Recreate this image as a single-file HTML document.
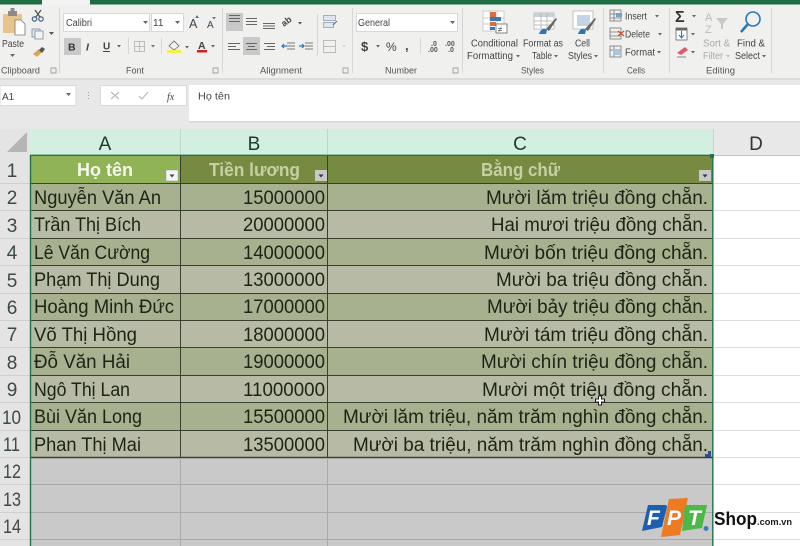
<!DOCTYPE html>
<html><head><meta charset="utf-8"><style>
html,body{margin:0;padding:0;background:#fff;width:800px;height:546px;overflow:hidden}
svg{display:block;filter:blur(.35px)}
text{font-family:"Liberation Sans",sans-serif}
.rb{font-size:10px;fill:#444}
.gl{font-size:9.500px;fill:#555}
.d{font-size:19px;fill:#1c2414}
.rh{font-size:19px;fill:#3c4a40}
.ch{font-size:19px;fill:#1f3a2a}
.h{font-size:18px;font-weight:bold}
</style></head><body>
<svg width="800" height="546" viewBox="0 0 800 546" xmlns="http://www.w3.org/2000/svg">
<!-- title tabs -->
<rect width="800" height="80" fill="#f0f0ef"/>
<rect x="0" y="0" width="42" height="4.500" fill="#1f6e43"/>
<rect x="90" y="0" width="710" height="4.500" fill="#1f6e43"/>
<rect x="42" y="0" width="48" height="5" fill="#f3f3f3"/>
<!-- ribbon separators -->
<g stroke="#d6d6d6" stroke-width="1">
<path d="M59.500 8V73M222.500 8V73M352.500 8V73M462.500 8V73M603.500 8V73M669.500 8V73M771.500 8V73M317.500 14V56M128.500 38V54M161.500 38V54M420.500 38V54"/>
</g>
<!-- Clipboard -->
<rect x="3" y="14" width="19" height="19" rx="1" fill="#e8c48c"/>
<rect x="8" y="11" width="9" height="5" fill="#8b8b8b"/>
<rect x="10.500" y="8" width="4" height="4" fill="#8b8b8b"/>
<path d="M15 20h6l4 4v11H15z" fill="#fff" stroke="#777" stroke-width=".8"/>
<text x="2" y="47" class="rb" textLength="22" lengthAdjust="spacingAndGlyphs">Paste</text>
<path d="M10 54h5l-2.500 3z" fill="#666"/>
<g stroke="#4a6f92" fill="none" stroke-width="1.300"><circle cx="34.500" cy="19" r="2.200"/><circle cx="41" cy="19" r="2.200"/><path d="M36 17L41 10M40 17L35 10" stroke="#555"/></g>
<rect x="32" y="29" width="8" height="8" fill="#dfe6ec" stroke="#7d8b97" stroke-width=".8"/><rect x="35" y="31" width="8" height="8" fill="#f2f5f7" stroke="#7d8b97" stroke-width=".8"/>
<path d="M49 32h5l-2.500 3z" fill="#555"/>
<path d="M33 54l6-5 3 3-5 5z" fill="#d9a45a"/><path d="M39 50l3-3 3 2-3 4z" fill="#555"/>
<text x="1" y="73.500" class="gl" textLength="39" lengthAdjust="spacingAndGlyphs">Clipboard</text>
<path d="M51 68h5v5h-5z" fill="none" stroke="#888" stroke-width=".7"/>
<!-- Font -->
<rect x="63.500" y="13.500" width="86" height="18" fill="#fff" stroke="#d8d8d8"/>
<rect x="151.500" y="13.500" width="32" height="18" fill="#fff" stroke="#d8d8d8"/>
<text x="66" y="26" class="rb" textLength="26" lengthAdjust="spacingAndGlyphs">Calibri</text>
<text x="153" y="26" class="rb">11</text>
<path d="M143 21h5l-2.500 3zM175 21h5l-2.500 3z" fill="#666"/>
<text x="189" y="28" style="font-size:12.500px;fill:#444">A</text><path d="M195 18h4l-2-3z" fill="#4a7fb0"/>
<text x="207" y="28" style="font-size:10px;fill:#444">A</text><path d="M212 17h4l-2 2.500z" fill="#4a7fb0"/>
<rect x="64" y="38" width="17" height="17" fill="#c9c9c9"/>
<text x="68" y="50.500" style="font-size:10.500px;font-weight:bold;fill:#333">B</text>
<text x="86" y="50.500" style="font-size:10.500px;font-style:italic;font-weight:bold;fill:#444">I</text>
<text x="103" y="49.500" style="font-size:10px;font-weight:bold;fill:#444">U</text><rect x="103" y="51" width="7" height="1" fill="#444"/>
<path d="M117 45h4l-2 2.500z" fill="#666"/>
<rect x="134.500" y="41.500" width="10" height="10" fill="none" stroke="#bdbdbd"/><path d="M139.500 41v11M134 46.500h11" stroke="#bdbdbd"/>
<path d="M151 45h4l-2 2.500z" fill="#777"/>
<path d="M169 46l5-5 5 5-5 4z" fill="#f2f2f2" stroke="#666" stroke-width=".8"/>
<rect x="167" y="50" width="14" height="3" fill="#f4ef4a"/>
<path d="M185 46h4l-2 2.500z" fill="#666"/>
<text x="198" y="49" style="font-size:10.500px;font-weight:bold;fill:#444">A</text>
<rect x="197" y="50" width="10" height="2.500" fill="#d71f1f"/>
<path d="M211 45h4l-2 2.500z" fill="#666"/>
<text x="126" y="73.500" class="gl" textLength="18" lengthAdjust="spacingAndGlyphs">Font</text>
<path d="M213 68h5v5h-5z" fill="none" stroke="#888" stroke-width=".7"/>
<!-- Alignment -->
<rect x="226" y="13" width="17" height="18" fill="#c9c9c9"/>
<rect x="243" y="37" width="17" height="18" fill="#c9c9c9"/>
<g stroke="#666" stroke-width="1.100">
<path d="M229 15.500h11M229 18.500h11M229 21.500h11"/>
<path d="M246 18.500h11M246 21.500h11M246 24.500h11"/>
<path d="M263 23.500h12M263 26h12M263 28.500h12"/>
<path d="M228 43.500h12M228 46.500h8M228 49.500h12"/>
<path d="M246 43.500h11M248 46.500h7M246 49.500h11"/>
<path d="M264 43.500h11M267 46.500h8M264 49.500h11"/>
<path d="M287 43h8M287 46h8M287 49h8M305 43h8M305 46h8M305 49h8" stroke="#777"/>
</g>
<path d="M282 46h5M284 44l-2 2 2 2M299 46h5M302 44l2 2-2 2" stroke="#2a77bb" stroke-width="1.200" fill="none"/>
<text x="284" y="27" transform="rotate(-38 284 27)" style="font-size:9px;fill:#444;font-weight:bold">ab</text>
<path d="M298 22h4l-2 2.500z" fill="#555"/>
<rect x="323.500" y="15.500" width="12" height="5" fill="#dfe6ec" stroke="#8298ab" stroke-width=".7"/>
<rect x="323.500" y="22.500" width="10" height="5" fill="#dfe6ec" stroke="#8298ab" stroke-width=".7"/>
<path d="M333 25l4-4" stroke="#2a77bb" fill="none"/>
<rect x="323.500" y="40.500" width="12" height="12" fill="none" stroke="#bbb"/><path d="M323 46.500h13" stroke="#bbb"/>
<path d="M342 45h4l-2 2z" fill="#ccc"/>
<text x="260" y="73.500" class="gl" textLength="42" lengthAdjust="spacingAndGlyphs">Alignment</text>
<path d="M343 68h5v5h-5z" fill="none" stroke="#888" stroke-width=".7"/>
<!-- Number -->
<rect x="356.500" y="13.500" width="101" height="18" fill="#fff" stroke="#d8d8d8"/>
<text x="358" y="26" class="rb" textLength="32" lengthAdjust="spacingAndGlyphs">General</text>
<path d="M450 21h5l-2.500 3z" fill="#666"/>
<text x="361" y="51" style="font-size:13px;font-weight:bold;fill:#444">$</text>
<path d="M376 45h4l-2 2.500z" fill="#666"/>
<text x="386" y="51" style="font-size:12px;fill:#444">%</text>
<text x="405" y="50" style="font-size:13px;font-weight:bold;fill:#444">,</text>
<text x="431" y="46" style="font-size:7px;font-weight:bold;fill:#555">.0</text><text x="428" y="52" style="font-size:7px;font-weight:bold;fill:#555">.00</text>
<text x="445" y="46" style="font-size:7px;font-weight:bold;fill:#555">.00</text><text x="448" y="52" style="font-size:7px;font-weight:bold;fill:#555">.0</text>
<text x="385" y="73.500" class="gl" textLength="32" lengthAdjust="spacingAndGlyphs">Number</text>
<path d="M453 68h5v5h-5z" fill="none" stroke="#888" stroke-width=".7"/>
<!-- Styles -->
<rect x="483" y="11" width="21" height="20" fill="#fff" stroke="#bbb" stroke-width=".7"/>
<path d="M483 18h21M483 24h21M490 11v20M497 11v20" stroke="#bbb" stroke-width=".7"/>
<rect x="490" y="12" width="6" height="5" fill="#d96f3c"/><rect x="490" y="17" width="11" height="4" fill="#3a78b5"/><rect x="490" y="22" width="6" height="4" fill="#d96f3c"/><rect x="490" y="27" width="5" height="3" fill="#3a78b5"/>
<rect x="496" y="24" width="11" height="9" fill="#fff" stroke="#666" stroke-width=".8"/>
<text x="498" y="32" style="font-size:8px;fill:#444">≠</text>
<text x="471" y="46.500" class="rb" textLength="47" lengthAdjust="spacingAndGlyphs">Conditional</text>
<text x="467" y="59" class="rb" textLength="46" lengthAdjust="spacingAndGlyphs">Formatting</text>
<path d="M516 55h4l-2 2.500z" fill="#666"/>
<rect x="534" y="13" width="20" height="16" fill="#fff" stroke="#aaa" stroke-width=".7"/>
<rect x="534" y="13" width="20" height="4" fill="#c8d0d8"/><path d="M534 21h20M534 25h20M541 13v16M547 13v16" stroke="#aaa" stroke-width=".7"/>
<path d="M539 34c2-6 6-6 8-4l-1 4z" fill="#2a77bb"/><path d="M546 29l10-11 1 1-8 12z" fill="#666"/>
<text x="523" y="46.500" class="rb" textLength="40" lengthAdjust="spacingAndGlyphs">Format as</text>
<text x="532" y="59" class="rb" textLength="20" lengthAdjust="spacingAndGlyphs">Table</text>
<path d="M554 55h4l-2 2.500z" fill="#666"/>
<rect x="573" y="11" width="20" height="18" fill="#fff" stroke="#aaa" stroke-width=".7"/>
<rect x="577" y="15" width="13" height="11" fill="#c5d3e6"/>
<path d="M578 34c2-6 6-6 8-4l-1 4z" fill="#2a77bb"/><path d="M585 29l10-11 1 1-8 12z" fill="#666"/>
<text x="575" y="46.500" class="rb" textLength="15" lengthAdjust="spacingAndGlyphs">Cell</text>
<text x="568" y="59" class="rb" textLength="24" lengthAdjust="spacingAndGlyphs">Styles</text>
<path d="M594 55h4l-2 2.500z" fill="#666"/>
<text x="521" y="73.500" class="gl" textLength="23" lengthAdjust="spacingAndGlyphs">Styles</text>
<!-- Cells -->
<g fill="none" stroke="#777" stroke-width=".8"><rect x="610" y="10" width="11" height="11"/><path d="M610 14h11M610 18h11M614 10v11"/><rect x="610" y="28" width="11" height="11"/><path d="M610 32h11M610 36h11"/><rect x="610" y="46" width="11" height="11"/><path d="M610 50h11M614 46v11"/></g>
<path d="M616 13h6v4h-6z" fill="#6fa2cf"/>
<path d="M618 31l6 5M624 31l-6 5" stroke="#d9502e" stroke-width="1.200"/>
<rect x="613" y="49" width="7" height="6" fill="#a9c4de"/>
<text x="625" y="19.500" class="rb" textLength="22" lengthAdjust="spacingAndGlyphs">Insert</text>
<text x="625" y="37.500" class="rb" textLength="25" lengthAdjust="spacingAndGlyphs">Delete</text>
<text x="625" y="55.500" class="rb" textLength="30" lengthAdjust="spacingAndGlyphs">Format</text>
<path d="M655 15h4l-2 2.500zM658 33h4l-2 2.500zM657 51h4l-2 2.500z" fill="#666"/>
<text x="627" y="73.500" class="gl" textLength="18" lengthAdjust="spacingAndGlyphs">Cells</text>
<!-- Editing -->
<text x="675" y="22" style="font-size:16px;fill:#333;font-weight:bold">Σ</text>
<path d="M692 15h4l-2 2.500zM691 33h4l-2 2.500zM691 51h4l-2 2.500z" fill="#666"/>
<rect x="676" y="28" width="11" height="12" fill="#fff" stroke="#666" stroke-width=".8"/>
<rect x="676" y="28" width="11" height="2.500" fill="#666"/>
<path d="M681.500 31v7M679 35l2.500 3 2.500-3" stroke="#2a77bb" fill="none"/>
<path d="M677 53l8-6 3 3-7 5z" fill="#e05a6c"/><path d="M677 57h9" stroke="#888"/>
<text x="705" y="21" style="font-size:11px;fill:#bbb">A</text><text x="705" y="33" style="font-size:11px;fill:#bbb">Z</text>
<path d="M716 18h12l-5 6v5h-2v-5z" fill="#c8c8c8"/>
<text x="703" y="46.500" class="rb" textLength="27" lengthAdjust="spacingAndGlyphs" style="fill:#aaa">Sort &amp;</text>
<text x="703" y="59" class="rb" textLength="20" lengthAdjust="spacingAndGlyphs" style="fill:#aaa">Filter</text>
<path d="M726 55h4l-2 2.500z" fill="#bbb"/>
<circle cx="753" cy="19" r="7" fill="none" stroke="#2a77bb" stroke-width="1.600"/>
<path d="M748 24l-7 8" stroke="#2a77bb" stroke-width="2.600"/>
<text x="737" y="46.500" class="rb" textLength="28" lengthAdjust="spacingAndGlyphs">Find &amp;</text>
<text x="735" y="59" class="rb" textLength="25" lengthAdjust="spacingAndGlyphs">Select</text>
<path d="M762 55h4l-2 2.500z" fill="#666"/>
<text x="706" y="73.500" class="gl" textLength="29" lengthAdjust="spacingAndGlyphs">Editing</text>
<!-- formula bar -->
<rect y="78" width="800" height="52" fill="#e8e8e8"/>
<rect y="78" width="800" height="2" fill="#dcdcdc"/>
<rect x="0" y="85.500" width="76" height="20" fill="#fff" stroke="#dadada"/>
<text x="2" y="100" style="font-size:10px;fill:#444">A1</text>
<path d="M66 93h5l-2.500 3z" fill="#666"/>
<path d="M88.500 92v1M88.500 95v1M88.500 98v1" stroke="#999"/>
<rect x="100.500" y="85.500" width="86" height="20" fill="#fff" stroke="#dadada"/>
<path d="M111 92l8 7M119 92l-8 7" stroke="#bbb" stroke-width="1.200"/>
<path d="M139 96l3 3 6-7" stroke="#bbb" stroke-width="1.200" fill="none"/>
<text x="167" y="100" style="font-size:10px;font-style:italic;font-family:'Liberation Serif',serif;fill:#444">fx</text>
<rect x="189" y="85" width="611" height="36.500" fill="#fff"/>
<rect x="189" y="121" width="611" height="1.500" fill="#d6d6d6"/>
<text x="198" y="99.500" style="font-size:10px;fill:#444" textLength="32" lengthAdjust="spacingAndGlyphs">Họ tên</text>
<!-- headers -->
<rect y="129" width="800" height="417" fill="#fff"/>
<rect x="0" y="129" width="30" height="417" fill="#e4e4e4"/>
<rect x="30" y="129" width="770" height="26" fill="#e8e8e8"/>
<rect x="30" y="129" width="683" height="26" fill="#d2efe0"/>
<path d="M7 152L27 132V152z" fill="#b5b5b5"/>
<path d="M180.500 129v26M327.500 129v26" stroke="#bcd6c7"/>
<path d="M713.500 129v26" stroke="#cfcfcf"/>
<path d="M714 155.500h86" stroke="#c4c4c4"/>
<text x="105" y="150" text-anchor="middle" class="ch">A</text>
<text x="254" y="150" text-anchor="middle" class="ch">B</text>
<text x="520" y="150" text-anchor="middle" class="ch">C</text>
<text x="756" y="150" text-anchor="middle" style="font-size:19px;fill:#333">D</text>
<!-- body right white gridlines -->
<g stroke="#dcdcdc"><path d="M714 183.500h86M714 210.500h86M714 238.500h86M714 265.500h86M714 293.500h86M714 320.500h86M714 347.500h86M714 375.500h86M714 402.500h86M714 430.500h86M714 457.500h86M714 484.500h86M714 512.500h86M714 539.500h86"/></g>
<!-- row header lines -->
<g stroke="#cfcfcf"><path d="M0 183.500h30M0 210.500h30M0 238.500h30M0 265.500h30M0 293.500h30M0 320.500h30M0 347.500h30M0 375.500h30M0 402.500h30M0 430.500h30M0 457.500h30M0 484.500h30M0 512.500h30M0 539.500h30"/></g>
<text x="12" y="177" class="rh" text-anchor="middle">1</text>
<text x="12" y="204" class="rh" text-anchor="middle">2</text>
<text x="12" y="232" class="rh" text-anchor="middle">3</text>
<text x="12" y="259" class="rh" text-anchor="middle">4</text>
<text x="12" y="287" class="rh" text-anchor="middle">5</text>
<text x="12" y="314" class="rh" text-anchor="middle">6</text>
<text x="12" y="341" class="rh" text-anchor="middle">7</text>
<text x="12" y="369" class="rh" text-anchor="middle">8</text>
<text x="12" y="396" class="rh" text-anchor="middle">9</text>
<text x="2" y="424" class="rh" textLength="19" lengthAdjust="spacingAndGlyphs">10</text>
<text x="3" y="451" class="rh" textLength="17" lengthAdjust="spacingAndGlyphs">11</text>
<text x="3" y="478" class="rh" textLength="18" lengthAdjust="spacingAndGlyphs">12</text>
<text x="3" y="506" class="rh" textLength="18" lengthAdjust="spacingAndGlyphs">13</text>
<text x="3" y="533" class="rh" textLength="18" lengthAdjust="spacingAndGlyphs">14</text>
<!-- sheet fill -->
<rect x="30" y="156" width="683" height="390" fill="#c9c9c9"/>
<rect x="30" y="156" width="150" height="27" fill="#90b355"/>
<rect x="180" y="156" width="533" height="27" fill="#778a42"/>
<rect x="30" y="183" width="683" height="27.500" fill="#a7b08f"/>
<rect x="30" y="210.500" width="683" height="27.500" fill="#b7bba6"/>
<rect x="30" y="238" width="683" height="27.500" fill="#a7b08f"/>
<rect x="30" y="265.500" width="683" height="27.500" fill="#b7bba6"/>
<rect x="30" y="293" width="683" height="27.500" fill="#a7b08f"/>
<rect x="30" y="320.500" width="683" height="27" fill="#b7bba6"/>
<rect x="30" y="347.500" width="683" height="27.500" fill="#a7b08f"/>
<rect x="30" y="375" width="683" height="27.500" fill="#b7bba6"/>
<rect x="30" y="402.500" width="683" height="27.500" fill="#a7b08f"/>
<rect x="30" y="430" width="683" height="27.500" fill="#b7bba6"/>
<g stroke="#3a4030" stroke-width="1" fill="none">
<path d="M30 183.500h683M30 210.500h683M30 238.500h683M30 265.500h683M30 293.500h683M30 320.500h683M30 347.500h683M30 375.500h683M30 402.500h683M30 430.500h683"/>
<path d="M180.500 156v301M327.500 156v301"/>
</g>
<path d="M30 457.500h683" stroke="#3a4030" stroke-width="1.500"/>
<g stroke="#a9a9a9"><path d="M30 484.500h683M30 512.500h683M30 539.500h683M180.500 458v88M327.500 458v88"/></g>
<rect x="712.600" y="155" width="87.400" height="391" fill="none"/>
<path d="M30.500 155v391M712.800 155v391" stroke="#217346" stroke-width="1.400" fill="none"/>
<path d="M30 155.300h683" stroke="#217346" stroke-width="1.400"/>
<rect x="710" y="154" width="4" height="4" fill="#217346"/>
<path d="M705 457h6v-6h-3v3h-3z" fill="#2b4f9c"/>
<!-- header text -->
<text class="h" x="77" y="176" fill="#f6f8ee" textLength="56" lengthAdjust="spacingAndGlyphs">Họ tên</text>
<text class="h" x="209" y="176" fill="#c6d0a2" textLength="91" lengthAdjust="spacingAndGlyphs">Tiền lương</text>
<text class="h" x="481" y="176" fill="#c6d0a2" textLength="79" lengthAdjust="spacingAndGlyphs">Bằng chữ</text>
<rect x="166" y="170" width="12" height="11" fill="#f4f4f4" stroke="#99a" stroke-width=".5"/><path d="M169.500 174.500h5l-2.500 3z" fill="#444"/>
<rect x="315" y="170" width="12" height="11" fill="#c8c8c8"/><path d="M318.500 174.500h5l-2.500 3z" fill="#333"/>
<rect x="699" y="170" width="12" height="11" fill="#c8c8c8"/><path d="M702.500 174.500h5l-2.500 3z" fill="#333"/>
<!-- data -->
<text class="d" x="34" y="204" textLength="127" lengthAdjust="spacingAndGlyphs">Nguyễn Văn An</text>
<text class="d" x="34" y="231" textLength="107" lengthAdjust="spacingAndGlyphs">Trần Thị Bích</text>
<text class="d" x="34" y="259" textLength="116" lengthAdjust="spacingAndGlyphs">Lê Văn Cường</text>
<text class="d" x="34" y="286" textLength="126" lengthAdjust="spacingAndGlyphs">Phạm Thị Dung</text>
<text class="d" x="34" y="313" textLength="140" lengthAdjust="spacingAndGlyphs">Hoàng Minh Đức</text>
<text class="d" x="34" y="341" textLength="103" lengthAdjust="spacingAndGlyphs">Võ Thị Hồng</text>
<text class="d" x="34" y="368" textLength="96" lengthAdjust="spacingAndGlyphs">Đỗ Văn Hải</text>
<text class="d" x="34" y="396" textLength="96" lengthAdjust="spacingAndGlyphs">Ngô Thị Lan</text>
<text class="d" x="34" y="423" textLength="108" lengthAdjust="spacingAndGlyphs">Bùi Văn Long</text>
<text class="d" x="34" y="451" textLength="107" lengthAdjust="spacingAndGlyphs">Phan Thị Mai</text>
<text class="d" x="243" y="204" textLength="82" lengthAdjust="spacingAndGlyphs">15000000</text>
<text class="d" x="243" y="231" textLength="82" lengthAdjust="spacingAndGlyphs">20000000</text>
<text class="d" x="243" y="259" textLength="82" lengthAdjust="spacingAndGlyphs">14000000</text>
<text class="d" x="243" y="286" textLength="82" lengthAdjust="spacingAndGlyphs">13000000</text>
<text class="d" x="243" y="313" textLength="82" lengthAdjust="spacingAndGlyphs">17000000</text>
<text class="d" x="243" y="341" textLength="82" lengthAdjust="spacingAndGlyphs">18000000</text>
<text class="d" x="243" y="368" textLength="82" lengthAdjust="spacingAndGlyphs">19000000</text>
<text class="d" x="243" y="396" textLength="82" lengthAdjust="spacingAndGlyphs">11000000</text>
<text class="d" x="243" y="423" textLength="82" lengthAdjust="spacingAndGlyphs">15500000</text>
<text class="d" x="243" y="451" textLength="82" lengthAdjust="spacingAndGlyphs">13500000</text>
<text class="d" x="486" y="204" textLength="222" lengthAdjust="spacingAndGlyphs">Mười lăm triệu đồng chẵn.</text>
<text class="d" x="491" y="231" textLength="217" lengthAdjust="spacingAndGlyphs">Hai mươi triệu đồng chẵn.</text>
<text class="d" x="484" y="259" textLength="224" lengthAdjust="spacingAndGlyphs">Mười bốn triệu đồng chẵn.</text>
<text class="d" x="496" y="286" textLength="212" lengthAdjust="spacingAndGlyphs">Mười ba triệu đồng chẵn.</text>
<text class="d" x="487" y="313" textLength="221" lengthAdjust="spacingAndGlyphs">Mười bảy triệu đồng chẵn.</text>
<text class="d" x="484" y="341" textLength="224" lengthAdjust="spacingAndGlyphs">Mười tám triệu đồng chẵn.</text>
<text class="d" x="481" y="368" textLength="227" lengthAdjust="spacingAndGlyphs">Mười chín triệu đồng chẵn.</text>
<text class="d" x="482" y="396" textLength="226" lengthAdjust="spacingAndGlyphs">Mười một triệu đồng chẵn.</text>
<text class="d" x="343" y="423" textLength="365" lengthAdjust="spacingAndGlyphs">Mười lăm triệu, năm trăm nghìn đồng chẵn.</text>
<text class="d" x="353" y="451" textLength="355" lengthAdjust="spacingAndGlyphs">Mười ba triệu, năm trăm nghìn đồng chẵn.</text>
<!-- cursor -->
<path d="M598.500 396h3v3h3v3h-3v3h-3v-3h-3v-3h3z" fill="#fff" stroke="#222" stroke-width="1"/>
<!-- FPT logo -->
<path d="M648 505h17q2 0 2 2l-5 20l-20 4z" fill="#1b5fae"/>
<path d="M669 499l19-1l-8 37l-19 2z" fill="#ee7a23"/>
<path d="M685 505h22l-5 23l-20 3z" fill="#4db848"/>
<text x="647" y="525" style="font-size:21px;font-weight:bold;font-style:italic;fill:#fff">F</text>
<text x="667" y="525" style="font-size:21px;font-weight:bold;font-style:italic;fill:#fff">P</text>
<text x="688" y="525" style="font-size:21px;font-weight:bold;font-style:italic;fill:#fff">T</text>
<circle cx="706" cy="528.500" r="2.500" fill="#3c7fb8"/>
<text x="714" y="525" style="font-size:18px;font-weight:bold;fill:#111" textLength="43" lengthAdjust="spacingAndGlyphs">Shop</text>
<text x="757" y="525" style="font-size:9px;font-weight:bold;fill:#222" textLength="35" lengthAdjust="spacingAndGlyphs">.com.vn</text>
</svg>
</body></html>
